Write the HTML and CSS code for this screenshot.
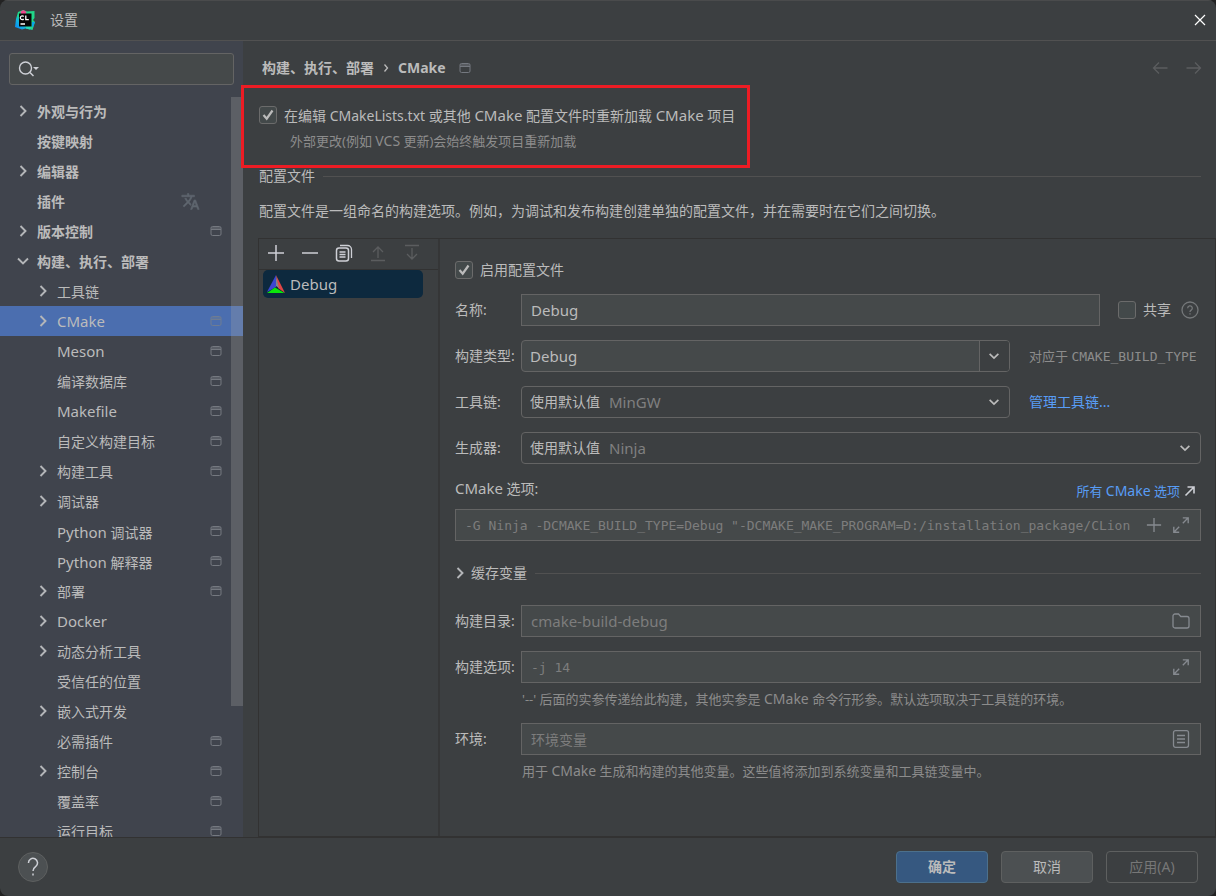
FILE: index.html
```html
<!DOCTYPE html>
<html lang="zh-CN">
<head>
<meta charset="utf-8">
<title>设置</title>
<link rel="stylesheet" href="styles.css">
</head>
<body>
<svg class="sprite" aria-hidden="true">
  <symbol id="right" viewBox="0 0 16 16"><path d="M5.500 3L10.500 8l-5 5" fill="none" stroke="currentColor" stroke-width="1.900"/></symbol>
  <symbol id="down" viewBox="0 0 16 16"><path d="M3 5.500l5 5 5-5" fill="none" stroke="currentColor" stroke-width="1.900"/></symbol>
  <symbol id="project" viewBox="0 0 12 12"><rect x="1" y="1.500" width="10" height="9" rx="1.500" fill="none" stroke="currentColor"/><path d="M1 4.500h10M1.500 3h9" stroke="currentColor"/></symbol>
  <symbol id="expand" viewBox="0 0 20 20"><path d="M12 8l6-6M12 2h6v6M8 12l-6 6M2 12v6h6" fill="none" stroke="currentColor" stroke-width="1.500"/></symbol>
  <symbol id="plus" viewBox="0 0 18 18"><path d="M9 1v16M1 9h16" stroke="currentColor" stroke-width="1.500"/></symbol>
</svg>
<div class="window">
  <header class="titlebar">
    <svg class="logo" viewBox="0 0 20 20">
      <defs><linearGradient id="lg" x1="0" y1="1" x2="1" y2="0"><stop offset="0" stop-color="#087cfa"/><stop offset=".3" stop-color="#12b5e0"/><stop offset=".45" stop-color="#21d789"/><stop offset="1" stop-color="#21d789"/></linearGradient></defs>
      <path d="M3 2l5-2 4 1.500L19.500 1v7L18 10l2 2-2.500 8-7-1.500L7 19.500 0 17l1-8z" fill="url(#lg)"/>
      <path d="M5.500 1.500L8.500 0l3 2-1 2H6z" fill="#f0468c"/><path d="M11 16l5 0-1 3.500-4-1z" fill="#28dcb4"/><path d="M17 12l3 0-2 5-1 0z" fill="#0aa5e8"/>
      <rect x="4" y="3.500" width="12.500" height="13" fill="#070707"/>
      <path d="M8.700 6.500a1.900 1.900 0 1 0 0 2.500M10.800 5.500v4.200h3M5.500 14h4.500" fill="none" stroke="#fff" stroke-width="1.300"/>
    </svg>
    <h1>设置</h1>
    <button class="bare close" aria-label="关闭"><svg viewBox="0 0 12 12"><path d="M1 1l10 10M11 1L1 11" stroke="#fff" stroke-width="1.200"/></svg></button>
  </header>

  <div class="main">
    <aside class="sidebar">
      <label class="search">
        <svg viewBox="0 0 22 18"><circle cx="7.500" cy="8" r="6" fill="none" stroke="currentColor" stroke-width="1.400"/><path d="M12 12.500l3.500 3.500" stroke="currentColor" stroke-width="1.500"/><path d="M15 7h6l-3 3z" fill="currentColor"/></svg>
        <input type="text" aria-label="搜索设置">
      </label>
      <nav class="tree">
        <a class="row top" href="#"><svg class="arrow"><use href="#right"/></svg><span>外观与行为</span></a>
        <a class="row top" href="#"><i class="arrow"></i><span>按键映射</span></a>
        <a class="row top" href="#"><svg class="arrow"><use href="#right"/></svg><span>编辑器</span></a>
        <a class="row top plugins" href="#"><i class="arrow"></i><span>插件</span><svg class="translate" viewBox="0 0 24 24"><path d="M12.870 15.070l-2.540-2.510.03-.03A17.500 17.500 0 0 0 14.070 6H17V4h-7V2H8v2H1v2h11.170A15.600 15.600 0 0 1 9 11.350 15.600 15.600 0 0 1 6.690 8h-2a17.600 17.600 0 0 0 2.980 4.560l-5.090 5.020L4 19l5-5 3.110 3.110.76-2.040zM18.500 10h-2L12 22h2l1.120-3h4.750L21 22h2l-4.500-12zm-2.620 7l1.620-4.330L19.120 17h-3.240z" fill="currentColor" stroke="currentColor" stroke-width=".7"/></svg></a>
        <a class="row top" href="#"><svg class="arrow"><use href="#right"/></svg><span>版本控制</span><svg class="mark"><use href="#project"/></svg></a>
        <a class="row top" href="#"><svg class="arrow"><use href="#down"/></svg><span>构建、执行、部署</span></a>
        <a class="row" href="#"><svg class="arrow"><use href="#right"/></svg><span>工具链</span></a>
        <a class="row selected" href="#"><svg class="arrow"><use href="#right"/></svg><span class="latin">CMake</span><svg class="mark"><use href="#project"/></svg></a>
        <a class="row" href="#"><i class="arrow"></i><span class="latin">Meson</span><svg class="mark"><use href="#project"/></svg></a>
        <a class="row" href="#"><i class="arrow"></i><span>编译数据库</span><svg class="mark"><use href="#project"/></svg></a>
        <a class="row" href="#"><i class="arrow"></i><span class="latin">Makefile</span><svg class="mark"><use href="#project"/></svg></a>
        <a class="row" href="#"><i class="arrow"></i><span>自定义构建目标</span><svg class="mark"><use href="#project"/></svg></a>
        <a class="row" href="#"><svg class="arrow"><use href="#right"/></svg><span>构建工具</span><svg class="mark"><use href="#project"/></svg></a>
        <a class="row" href="#"><svg class="arrow"><use href="#right"/></svg><span>调试器</span></a>
        <a class="row" href="#"><i class="arrow"></i><span><span class="latin">Python</span> 调试器</span><svg class="mark"><use href="#project"/></svg></a>
        <a class="row" href="#"><i class="arrow"></i><span><span class="latin">Python</span> 解释器</span><svg class="mark"><use href="#project"/></svg></a>
        <a class="row" href="#"><svg class="arrow"><use href="#right"/></svg><span>部署</span><svg class="mark"><use href="#project"/></svg></a>
        <a class="row" href="#"><svg class="arrow"><use href="#right"/></svg><span class="latin">Docker</span></a>
        <a class="row" href="#"><svg class="arrow"><use href="#right"/></svg><span>动态分析工具</span></a>
        <a class="row" href="#"><i class="arrow"></i><span>受信任的位置</span></a>
        <a class="row" href="#"><svg class="arrow"><use href="#right"/></svg><span>嵌入式开发</span></a>
        <a class="row" href="#"><i class="arrow"></i><span>必需插件</span><svg class="mark"><use href="#project"/></svg></a>
        <a class="row" href="#"><svg class="arrow"><use href="#right"/></svg><span>控制台</span><svg class="mark"><use href="#project"/></svg></a>
        <a class="row" href="#"><i class="arrow"></i><span>覆盖率</span><svg class="mark"><use href="#project"/></svg></a>
        <a class="row" href="#"><i class="arrow"></i><span>运行目标</span><svg class="mark"><use href="#project"/></svg></a>
        <div class="scrollbar"></div>
      </nav>
    </aside>

    <main class="content">
      <div class="crumbs">
        <b>构建、执行、部署</b><svg class="sep" viewBox="0 0 6 10"><path d="M1.500 1.500L4.500 5l-3 3.500" fill="none" stroke="currentColor" stroke-width="1.300"/></svg><b>CMake</b><svg class="mark"><use href="#project"/></svg>
        <div class="history">
          <button class="bare" aria-label="后退"><svg viewBox="0 0 16 16"><path d="M15.500 8H1.500M7 2.500L1.500 8 7 13.500" fill="none" stroke="currentColor" stroke-width="1.300"/></svg></button>
          <button class="bare" aria-label="前进"><svg viewBox="0 0 16 16"><path d="M.5 8h14M9 2.500L14.500 8 9 13.500" fill="none" stroke="currentColor" stroke-width="1.300"/></svg></button>
        </div>
      </div>

      <div class="reload">
        <label class="check"><input type="checkbox" checked><span>在编辑 CMakeLists.txt 或其他 <span class="latin">CMake</span> 配置文件时重新加载 <span class="latin">CMake</span> 项目</span></label>
        <p class="hint">外部更改(例如 <span class="latin">VCS</span> 更新)会始终触发项目重新加载</p>
        <div class="highlight"></div>
      </div>

      <h2 class="section">配置文件</h2>
      <p class="intro">配置文件是一组命名的构建选项。例如，为调试和发布构建创建单独的配置文件，并在需要时在它们之间切换。</p>

      <div class="profiles">
        <div class="list">
          <div class="toolbar">
            <button class="bare" aria-label="添加"><svg viewBox="0 0 18 18"><use href="#plus"/></svg></button>
            <button class="bare" aria-label="移除"><svg viewBox="0 0 18 18"><path d="M1 9h16" stroke="currentColor" stroke-width="1.500"/></svg></button>
            <button class="bare" aria-label="复制"><svg viewBox="0 0 18 18"><rect x="1.500" y="4" width="12" height="13" rx="2.500" fill="none" stroke="currentColor" stroke-width="1.500"/><path d="M5 1.500h7.500a4 4 0 0 1 4 4V14M4.500 8h6M4.500 10.500h6M4.500 13h6" fill="none" stroke="currentColor" stroke-width="1.300"/></svg></button>
            <button class="bare" disabled aria-label="上移"><svg viewBox="0 0 18 18"><path d="M9 14V3M4 8l5-5 5 5M2 16.500h14" fill="none" stroke="currentColor" stroke-width="1.300"/></svg></button>
            <button class="bare" disabled aria-label="下移"><svg viewBox="0 0 18 18"><path d="M9 4v11M4 10l5 5 5-5M2 1.500h14" fill="none" stroke="currentColor" stroke-width="1.300"/></svg></button>
          </div>
          <button class="bare profile latin"><svg viewBox="0 0 18 18"><path d="M9 0L0 17l9-5z" fill="#3c46d2"/><path d="M9 0l9 18-7-5z" fill="#e04646"/><path d="M0 18l8-5.500L17.500 18z" fill="#0be60b"/><path d="M9 1v10l3 2z" fill="#81858b"/></svg>Debug</button>
        </div>

        <form class="form">
          <label class="check enable"><input type="checkbox" checked><span>启用配置文件</span></label>

          <div class="field">
            <label for="name">名称:</label>
            <div class="box"><input id="name" class="latin" type="text" value="Debug"></div>
            <div class="share"><label class="check"><input type="checkbox"><span>共享</span></label>
            <svg class="help" viewBox="0 0 18 18"><circle cx="9" cy="9" r="8" fill="none" stroke="currentColor" stroke-width="1.300"/><path d="M6.700 7.200a2.300 2.300 0 1 1 3.500 1.900c-.8.500-1.200.8-1.200 1.800M9 12.200v1.400" fill="none" stroke="currentColor" stroke-width="1.300"/></svg></div>
          </div>

          <div class="field">
            <label for="type">构建类型:</label>
            <div class="combo editable"><select id="type" class="latin"><option>Debug</option></select><svg class="chevron"><use href="#down"/></svg></div>
            <div class="aside muted">对应于 <code>CMAKE_BUILD_TYPE</code></div>
          </div>

          <div class="field">
            <label for="toolchain">工具链:</label>
            <div class="combo"><select id="toolchain"><option>使用默认值</option></select><span class="detail latin">MinGW</span><svg class="chevron"><use href="#down"/></svg></div>
            <div class="aside"><a href="#">管理工具链...</a></div>
          </div>

          <div class="field">
            <label for="generator">生成器:</label>
            <div class="combo"><select id="generator"><option>使用默认值</option></select><span class="detail latin">Ninja</span><svg class="chevron"><use href="#down"/></svg></div>
          </div>

          <div class="options-head">
            <label for="options"><span class="latin">CMake</span> 选项:</label>
            <a href="#"><span>所有 <span class="latin">CMake</span> 选项</span><svg viewBox="0 0 12 12"><path d="M1.500 10.500l8.500-8.500M3.500 2H10v6.500" fill="none" stroke="#ced0d6" stroke-width="1.600"/></svg></a>
          </div>
          <div class="box options"><input id="options" class="mono" type="text" placeholder="-G Ninja -DCMAKE_BUILD_TYPE=Debug &quot;-DCMAKE_MAKE_PROGRAM=D:/installation_package/CLion"><button type="button" class="bare" aria-label="添加选项"><svg viewBox="0 0 18 18"><use href="#plus"/></svg></button><button type="button" class="bare" aria-label="展开"><svg><use href="#expand"/></svg></button></div>

          <button type="button" class="bare cache"><svg class="arrow"><use href="#right"/></svg><span>缓存变量</span></button>

          <div class="field">
            <label for="dir">构建目录:</label>
            <div class="box"><input id="dir" class="latin" type="text" placeholder="cmake-build-debug"><button type="button" class="bare" aria-label="浏览"><svg viewBox="0 0 18 18"><path d="M1 4a2 2 0 0 1 2-2h3.500l2.300 2.500H15a2 2 0 0 1 2 2V14a2 2 0 0 1-2 2H3a2 2 0 0 1-2-2z" fill="none" stroke="currentColor" stroke-width="1.300"/></svg></button></div>
          </div>

          <div class="field">
            <label for="build">构建选项:</label>
            <div class="box"><input id="build" class="mono" type="text" placeholder="-j 14"><button type="button" class="bare" aria-label="展开"><svg><use href="#expand"/></svg></button></div>
          </div>
          <p class="hint under">'--' 后面的实参传递给此构建，其他实参是 <span class="latin">CMake</span> 命令行形参。默认选项取决于工具链的环境。</p>

          <div class="field">
            <label for="env">环境:</label>
            <div class="box"><input id="env" type="text" placeholder="环境变量"><button type="button" class="bare" aria-label="编辑环境变量"><svg viewBox="0 0 18 18"><rect x="1.500" y=".7" width="15" height="16.600" rx="2" fill="none" stroke="currentColor" stroke-width="1.300"/><path d="M5 5.500h8M5 9h8M5 12.500h8" stroke="currentColor" stroke-width="1.400"/></svg></button></div>
          </div>
          <p class="hint under">用于 <span class="latin">CMake</span> 生成和构建的其他变量。这些值将添加到系统变量和工具链变量中。</p>
        </form>
      </div>
    </main>
  </div>

  <footer class="footer">
    <button class="help-button" aria-label="帮助"><svg viewBox="0 0 12 20"><path d="M1.500 6a4.500 4.500 0 1 1 7.300 3.400C7 10.700 6 11.500 6 14M6 16.500v2" fill="none" stroke="currentColor" stroke-width="1.500"/></svg></button>
    <button class="button primary">确定</button>
    <button class="button">取消</button>
    <button class="button" disabled>应用(A)</button>
  </footer>
</div>
</body>
</html>
```

FILE: styles.css
```css
* { box-sizing: border-box; }

body {
  margin: 0;
  background: #232323;
  color: #bbb;
  font: 14px/20px "Noto Sans", "Noto Sans CJK SC", sans-serif;
}

h1, h2, p { margin: 0; font-size: 14px; font-weight: 400; }
a { color: #589df6; text-decoration: none; }
svg { flex: none; display: block; }
input, select, button { font: inherit; color: inherit; }
.sprite { position: absolute; width: 0; height: 0; }
.latin { font-size: 15px; }

.bare {
  display: flex;
  align-items: center;
  padding: 0;
  border: 0;
  background: none;
}

.window {
  display: flex;
  flex-direction: column;
  height: 100vh;
  background: #3c3f41;
  border-radius: 8px;
  overflow: hidden;
}

.titlebar {
  display: flex;
  align-items: center;
  height: 41px;
  flex: none;
  padding: 0 10px 2px 15px;
  border-top: 1px solid #4a4b4c;
  border-bottom: 1px solid #515151;
}
.logo { width: 20px; height: 20px; margin-right: 15px; }
.close { margin-left: auto; }
.close svg { width: 12px; height: 12px; }

.main { display: flex; flex: 1; min-height: 0; }

.sidebar {
  display: flex;
  flex-direction: column;
  width: 243px;
  flex: none;
  padding-top: 12px;
  background: #40444d;
}
.search {
  display: flex;
  align-items: center;
  height: 32px;
  flex: none;
  margin: 0 9px 11px;
  padding: 0 8px;
  border: 1px solid #646464;
  border-radius: 3px;
  background: #45494a;
}
.search svg { width: 22px; height: 18px; color: #ced0d6; }
.search input { flex: 1; min-width: 0; border: 0; background: none; outline: 0; }

.tree { position: relative; flex: 1; min-height: 0; overflow: hidden; }
.row {
  display: flex;
  align-items: center;
  height: 30px;
  padding: 0 21px 0 35px;
  color: #bbb;
}
.row > span { padding-top: 2px; }
.row > .latin { padding-top: 0; }
.row.top { padding-left: 15px; }
.row.top span { font-weight: 600; }
.row.selected { background: #4b6eaf; }
.row.selected .mark { color: #6e7c92; }
.arrow { width: 16px; height: 16px; margin-right: 6px; color: #b4b6b9; }
.mark { width: 12px; height: 12px; color: #757980; }
.row .mark { margin-left: auto; }
.translate { width: 19px; height: 19px; margin-left: auto; color: #5f666f; }
.row.plugins { padding-right: 43px; }
.scrollbar {
  position: absolute;
  top: 1px;
  right: 0;
  width: 12px;
  height: 609px;
  background: rgb(166 166 166 / 28%);
}

.content {
  display: flex;
  flex-direction: column;
  flex: 1;
  min-width: 0;
  padding: 17px 0 0 16px;
}
.crumbs { display: flex; align-items: center; height: 20px; padding: 0 14px 0 3px; }
.sep { width: 6px; height: 10px; margin: 0 9px; }
.crumbs .mark { margin-left: 13px; }
.history { display: flex; gap: 18px; margin-left: auto; color: #5b5d5f; }
.history svg { width: 16px; height: 16px; }

.reload { position: relative; height: 88px; padding-top: 27px; }
.check { display: flex; align-items: center; gap: 7px; height: 20px; }
.check input {
  appearance: none;
  flex: none;
  width: 18px;
  height: 18px;
  margin: 0;
  border: 1px solid #6b6b6b;
  border-radius: 3px;
  background: #43494a;
}
.check input:checked {
  background: #43494a url("data:image/svg+xml,%3Csvg xmlns='http://www.w3.org/2000/svg' viewBox='0 0 16 16'%3E%3Cpath d='M3.500 8l3.200 3.700L12.500 3.500' fill='none' stroke='%23bbbbbb' stroke-width='2.200'/%3E%3C/svg%3E");
}
.hint { font-size: 13px; color: #8c8c8c; }
.hint .latin, .options-head a .latin { font-size: 14px; }
.reload .hint { padding: 6px 0 0 31px; }
.highlight {
  position: absolute;
  top: 7px;
  left: -18px;
  width: 509px;
  height: 83px;
  border: 3px solid #ed1c24;
  pointer-events: none;
}

.section { display: flex; align-items: center; gap: 8px; margin-right: 15px; }
.section::after { content: ""; flex: 1; height: 1px; background: #515151; }
.intro { margin-top: 15px; }

.profiles {
  display: flex;
  flex: 1;
  min-height: 0;
  margin: 17px 0 0 -1px;
  border: 1px solid #323232;
}
.list { width: 181px; flex: none; border-right: 2px solid #353637; }
.toolbar {
  display: flex;
  gap: 16px;
  height: 31px;
  padding: 0 0 2px 8px;
  border-bottom: 1px solid #323232;
  color: #ced0d6;
}
.toolbar svg { width: 18px; height: 18px; }
.toolbar :disabled { color: #5b5d5f; }
.profile {
  gap: 5px;
  width: 160px;
  height: 28px;
  margin-left: 4px;
  padding-left: 4px;
  border-radius: 5px;
  background: #0d293e;
}
.profile.latin { font-size: 15px; }
.profile svg { width: 18px; height: 18px; }

.form {
  display: flex;
  flex-direction: column;
  flex: 1;
  min-width: 0;
  padding: 21px 14px 0 15px;
}
.enable { margin-bottom: 14px; }
.field { display: flex; align-items: center; height: 32px; margin-bottom: 14px; }
.field > label { width: 66px; flex: none; white-space: nowrap; }
.box {
  display: flex;
  align-items: center;
  flex: 1;
  min-width: 0;
  height: 32px;
  padding: 0 10px 0 9px;
  border: 1px solid #646464;
  background: #45494a;
}
.box input { flex: 1; min-width: 0; height: 28px; padding: 0; border: 0; background: none; outline: 0; }
.box input::placeholder { color: #7d7d7d; opacity: 1; }
.box .bare { color: #868a90; }
.box .bare svg { width: 18px; height: 18px; }
.options .bare:last-child { margin-left: 10px; }
.options .bare:nth-child(2) { margin-left: 5px; }
.options .bare:nth-child(2) svg { width: 16px; height: 16px; }
.mono, code { font-family: "DejaVu Sans Mono", monospace; font-size: 13px; }

.share { display: flex; align-items: center; justify-content: space-between; width: 83px; margin-left: 18px; padding-right: 2px; }
.help { width: 18px; height: 18px; color: #75787a; }
.aside { width: 172px; margin-left: 19px; white-space: nowrap; font-size: 13px; }
.muted { color: #8c8c8c; }
.aside a { font-size: 14px; }

.combo {
  position: relative;
  flex: 1;
  min-width: 0;
  height: 32px;
  border: 1px solid #646464;
  border-radius: 4px;
}
.combo select {
  appearance: none;
  width: 100%;
  height: 30px;
  padding: 0 32px 0 8px;
  border: 0;
  background: none;
  outline: 0;
}
.combo .detail { position: absolute; top: 5px; left: 87px; color: #808080; pointer-events: none; }
.chevron { position: absolute; top: 8px; right: 8px; width: 14px; height: 14px; pointer-events: none; }
.editable { background: #45494a; }
.editable::after {
  content: "";
  position: absolute;
  top: 0;
  right: 0;
  bottom: 0;
  width: 29px;
  border-left: 1px solid #646464;
  border-radius: 0 3px 3px 0;
  background: #3c3f41;
  pointer-events: none;
}
.editable .chevron { z-index: 1; }

.options-head { display: flex; justify-content: space-between; margin-bottom: 8px; padding-right: 5px; }
.options-head a { display: flex; align-items: center; gap: 4px; height: 20px; margin-top: 3px; font-size: 13px; }
.options-head svg { width: 12px; height: 12px; }
.options { flex: none; }

.cache { height: 20px; margin: 22px 0; gap: 8px; }
.cache .arrow { width: 16px; height: 16px; margin: 0 -5px 0 -3px; }
.cache::after { content: ""; flex: 1; height: 1px; background: #515151; }
.under { margin: -8px 0 14px 67px; white-space: nowrap; }

.footer {
  display: flex;
  align-items: center;
  gap: 13px;
  height: 59px;
  flex: none;
  padding: 0 18px;
  border-top: 1px solid #323232;
}
.help-button {
  display: grid;
  place-items: center;
  width: 30px;
  height: 30px;
  margin-right: auto;
  padding: 0;
  border: 1px solid #5e6060;
  border-radius: 50%;
  background: #4c5052;
}
.help-button svg { width: 12px; height: 20px; color: #ced0d6; }
.button {
  width: 92px;
  height: 32px;
  padding: 0;
  border: 1px solid #5e6060;
  border-radius: 4px;
  background: #4c5052;
}
.button.primary { background: #365880; border-color: #4c708c; font-weight: 600; }
.button:disabled { color: #777; background: none; }
```
